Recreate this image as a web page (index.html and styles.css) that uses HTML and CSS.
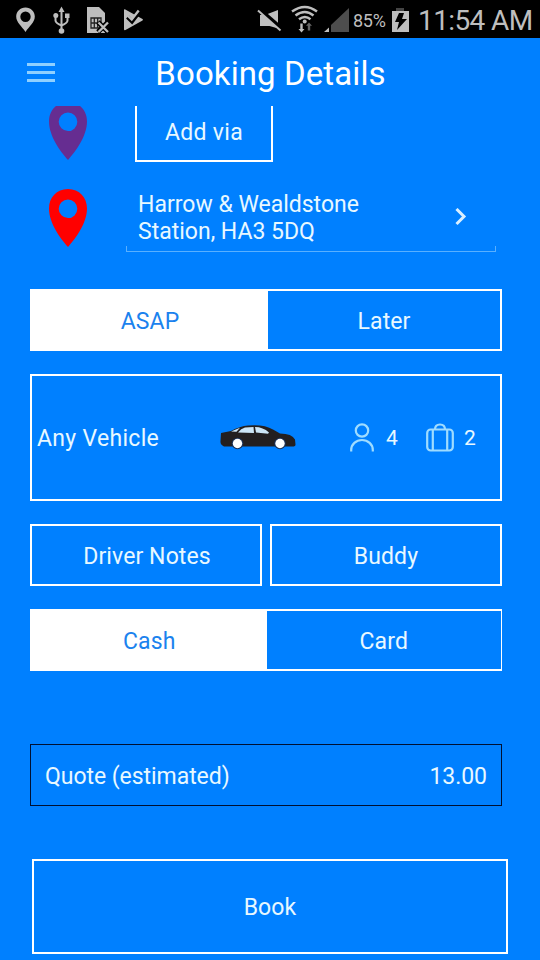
FILE: index.html
```html
<!DOCTYPE html>
<html lang="en">
<head>
  <meta charset="UTF-8">
  <meta name="viewport" content="width=device-width, initial-scale=1.0">
  <title>Booking Details</title>
  <link rel="stylesheet" href="styles.css">
</head>
<body>
  <div class="status-bar">
    <svg class="status-left" width="150" height="38" viewBox="0 0 150 38" fill="#bebebe">
      <path fill-rule="evenodd" d="M25.500 7.500c-5.300 0-9.300 4-9.300 9 0 6 5.500 9.500 9.300 15.500 3.800-6 9.300-9.500 9.300-15.500 0-5-4-9-9.300-9zm0 4a5.200 5.200 0 1 1 0 10.400 5.200 5.200 0 0 1 0-10.400z"/>
      <g fill="none" stroke="#bebebe" stroke-width="2">
        <path d="M61.500 11v18M55.500 17v3.500q0 2.500 6 5M67.500 17v3.500q0 2.500-6 5"/>
      </g>
      <path d="M61.500 6.500l3 5.500h-6z"/>
      <circle cx="61.500" cy="31" r="2.800"/>
      <circle cx="55.800" cy="15.500" r="2.500"/>
      <path d="M65 13.500h4.500V18H65z"/>
      <path d="M87 7h12l6 6v20H87z"/>
      <path d="M91 18h10v10H91zM94.300 18v10M97.700 18v10M91 23h10" fill="none" stroke="#222" stroke-width="1.300"/>
      <path d="M98 22l10 10M108 22l-10 10" stroke="#000" stroke-width="5"/>
      <path d="M98.500 22.500l9.500 9.500M108 22.500l-9.500 9.500" stroke="#bebebe" stroke-width="2.300"/>
      <path d="M124 10q0-1 1.300-.5L142.500 19q1 .7 0 1.500l-17 9.500q-1.500.5-1.500-.7z"/>
      <path d="M127.500 17l4.500 4.500 8.500-11" fill="none" stroke="#000" stroke-width="4"/>
      <path d="M127.500 15.500l4.200 4 7-9" fill="none" stroke="#bebebe" stroke-width="2.400"/>
    </svg>
    <svg class="status-right" width="95" height="38" viewBox="255 0 95 38" fill="#bebebe">
      <path d="M260 15h5l13-5v17l-1.500 1-7-2H260z"/>
      <path d="M258 8l23 20" stroke="#000" stroke-width="4"/>
      <path d="M258 10.500l22.500 20" stroke="#bebebe" stroke-width="2"/>
      <g fill="none" stroke="#bebebe" stroke-width="2.500">
        <path d="M292 11.500q13-9 25 0M295.500 15.500q9.500-7 18 0M299 19.300q6-4.500 11.500 0"/>
      </g>
      <circle cx="304.700" cy="21.500" r="2"/>
      <path d="M300.300 23.500h2.400V29h1.800l-3 3.500-3-3.500h1.800z"/>
      <path fill="#666" d="M307.800 30.500v-4.700H306l3-3.300 3 3.300h-1.800v4.700z"/>
      <path fill="#4d4d4d" d="M349 8v24h-18V25z"/>
      <path d="M329 27.500V32h-5z"/>
    </svg>
    <span class="battery-level">85%</span>
    <svg class="battery" width="18" height="24" viewBox="0 0 18 24">
      <path fill="#444" d="M5 0h8v3H5z"/>
      <path fill="#bebebe" d="M1 3h17v21H1z"/>
      <path fill="#000" d="M8 5h5l-2 6h5L6 22l2-8H4z"/>
    </svg>
    <span class="clock">11:54 AM</span>
  </div>

  <header class="header">
    <div class="menu"><span></span><span></span><span></span></div>
    <h1>Booking Details</h1>
  </header>

  <main class="content">
    <div class="via-row">
      <svg class="pin pin-via" viewBox="0 0 38 58">
        <path fill-rule="evenodd" d="M19 0C7.500 0 0 8.500 0 19.500 0 34 11 49 19 58c8-9 19-24 19-38.500C38 8.500 30.500 0 19 0zm0 10.500a9.300 9.300 0 1 1 0 18.600 9.300 9.300 0 0 1 0-18.600z"/>
      </svg>
      <button class="btn add-via">Add via</button>
    </div>

    <div class="address-row">
      <svg class="pin pin-drop" viewBox="0 0 38 58">
        <path fill-rule="evenodd" d="M19 0C7.500 0 0 8.500 0 19.500 0 34 11 49 19 58c8-9 19-24 19-38.500C38 8.500 30.500 0 19 0zm0 10.500a9.300 9.300 0 1 1 0 18.600 9.300 9.300 0 0 1 0-18.600z"/>
      </svg>
      <div class="address">
        <div class="address-line">
          <p>Harrow &amp; Wealdstone<br>Station, HA3 5DQ</p>
          <svg class="chevron" width="12" height="18" viewBox="0 0 12 18">
            <path d="M1.500 1L9 8.500 1.500 16" fill="none" stroke="#d9efff" stroke-width="3"/>
          </svg>
        </div>
        <div class="underline"></div>
      </div>
    </div>

    <div class="toggle when">
      <button class="option active">ASAP</button>
      <button class="option">Later</button>
    </div>

    <div class="vehicle">
      <span class="vehicle-name">Any Vehicle</span>
      <svg class="car" width="76" height="26" viewBox="0 0 76 26">
        <path fill="#231f20" d="M1 8l10-2Q20 1 28 .5q16-1.500 25 4l7 4q12 0 15 6l.500 5q0 2-3 2H4Q0 20 .5 16z"/>
        <path fill="#cde6f7" d="M18 7.500q3-4 7-5l8.500-.500.500 6zM35 2q8 0 14 5.500l-1 1.200-12-1.200zM11 6.500l9-3.700-3.500 4z"/>
        <circle cx="17.500" cy="18.500" r="5.800" fill="#1b3157"/>
        <circle cx="60" cy="18.500" r="5.800" fill="#1b3157"/>
        <circle cx="17.500" cy="18.500" r="4.700" fill="#fff"/>
        <circle cx="60" cy="18.500" r="4.700" fill="#fff"/>
      </svg>
      <svg class="person" width="24" height="30" viewBox="0 0 24 30" fill="none" stroke="#9fdcff" stroke-width="2.200">
        <circle cx="12" cy="7.500" r="6.200"/>
        <path d="M1.200 28.500V27a10.800 10 0 0 1 21.600 0v1.500"/>
      </svg>
      <span class="count seats">4</span>
      <svg class="bag" width="28" height="30" viewBox="0 0 28 30" fill="none" stroke="#9fdcff" stroke-width="2.200">
        <rect x="1.200" y="6.500" width="25.600" height="21" rx="3.500"/>
        <path d="M9 6.500q0-5 5-5t5 5M6.800 7v21M21.200 7v21"/>
      </svg>
      <span class="count">2</span>
    </div>

    <div class="pair">
      <button class="btn">Driver Notes</button>
      <button class="btn">Buddy</button>
    </div>

    <div class="toggle payment">
      <button class="option active">Cash</button>
      <button class="option">Card</button>
    </div>

    <div class="quote">
      <span>Quote (estimated)</span>
      <span>13.00</span>
    </div>

    <button class="btn book">Book</button>
  </main>
</body>
</html>
```

FILE: styles.css
```css
* {
  box-sizing: border-box;
}
body {
  margin: 0;
  width: 540px;
  height: 960px;
  display: flex;
  flex-direction: column;
  overflow: hidden;
  background: #0080ff;
  color: #e8f8ff;
  font-family: Roboto, "Liberation Sans", sans-serif;
  font-size: 23px;
  letter-spacing: 0.1px;
}
h1, p {
  margin: 0;
  font-weight: normal;
}
svg {
  display: block;
  flex: none;
}
button {
  font: inherit;
  letter-spacing: inherit;
  color: inherit;
  background: none;
  padding: 2px 0 0;
  border: none;
}
.status-bar {
  flex: none;
  height: 38px;
  display: flex;
  align-items: center;
  background: #000;
  color: #bebebe;
  letter-spacing: 0;
}
.status-right {
  margin-left: 105px;
}
.battery-level {
  width: 40px;
  padding: 3px 0 0 3px;
  font-size: 18px;
  letter-spacing: -0.3px;
}
.battery {
  margin: 1px 0 0 1px;
}
.clock {
  margin-left: 9px;
  padding-top: 3px;
  font-size: 28px;
  letter-spacing: -0.6px;
  white-space: nowrap;
}
.header {
  flex: none;
  height: 68px;
  display: grid;
  grid-template-columns: 100px 1fr 100px;
  align-items: center;
}
.header h1 {
  padding: 2px 0 0 1px;
  font-size: 33px;
  color: #fff;
  text-align: center;
  white-space: nowrap;
}
.menu {
  display: flex;
  flex-direction: column;
  gap: 5px;
  width: 28px;
  margin-left: 27px;
}
.menu span {
  height: 3px;
  background: #8fd0ff;
}
.content {
  flex: 1;
  min-height: 0;
  overflow: hidden;
  padding: 0 38px 0 30px;
}
.btn {
  border: 2px solid #fff;
}
.pin {
  width: 38px;
  height: 58px;
}
.pin-via {
  fill: #662d91;
}
.pin-drop {
  fill: #f00;
}
.via-row {
  display: flex;
  height: 60px;
  margin-top: -4px;
  padding-left: 19px;
}
.add-via {
  width: 138px;
  margin-left: 48px;
  padding-top: 0;
  letter-spacing: 0.3px;
}
.address-row {
  display: flex;
  align-items: center;
  height: 64px;
  margin-top: 26px;
  padding-left: 19px;
}
.address-row .pin {
  margin-top: -5px;
}
.address {
  width: 370px;
  height: 64px;
  margin-left: 39px;
  display: flex;
  flex-direction: column;
}
.address-line {
  flex: 1;
  display: flex;
  align-items: center;
  justify-content: space-between;
  padding: 0 29px 0 12px;
  line-height: 27px;
  letter-spacing: 0;
}
.address-line p {
  padding-top: 2px;
}
.underline {
  height: 6px;
  border: 1px solid #59b0ff;
  border-top: none;
}
.toggle {
  display: grid;
  grid-template-columns: 1fr 1fr;
  height: 62px;
  border: 2px solid #fff;
}
.option.active {
  background: #fff;
  color: #1b82ee;
}
.when {
  grid-template-columns: 236px 1fr;
  margin-top: 37px;
}
.vehicle {
  display: flex;
  align-items: center;
  height: 127px;
  margin-top: 23px;
  padding-left: 5px;
  border: 2px solid #fff;
}
.vehicle-name {
  width: 183px;
  padding-top: 2px;
  letter-spacing: 0.3px;
}
.person {
  margin-left: 54px;
}
.count {
  margin-left: 12px;
  font-size: 21px;
}
.seats {
  width: 28px;
  margin-right: 12px;
}
.bag {
  margin-right: -2px;
}
.pair {
  display: grid;
  grid-template-columns: 1fr 1fr;
  gap: 8px;
  height: 62px;
  margin-top: 23px;
}
.pair .btn:first-child {
  padding-left: 2px;
}
.payment {
  margin-top: 23px;
  border-right-width: 1px;
}
.quote {
  display: flex;
  align-items: center;
  justify-content: space-between;
  height: 62px;
  margin-top: 73px;
  padding: 2px 14px 0;
  border: 1px solid #001133;
  letter-spacing: -0.05px;
}
.book {
  display: block;
  width: 476px;
  height: 95px;
  margin: 53px 0 0 2px;
}
```
